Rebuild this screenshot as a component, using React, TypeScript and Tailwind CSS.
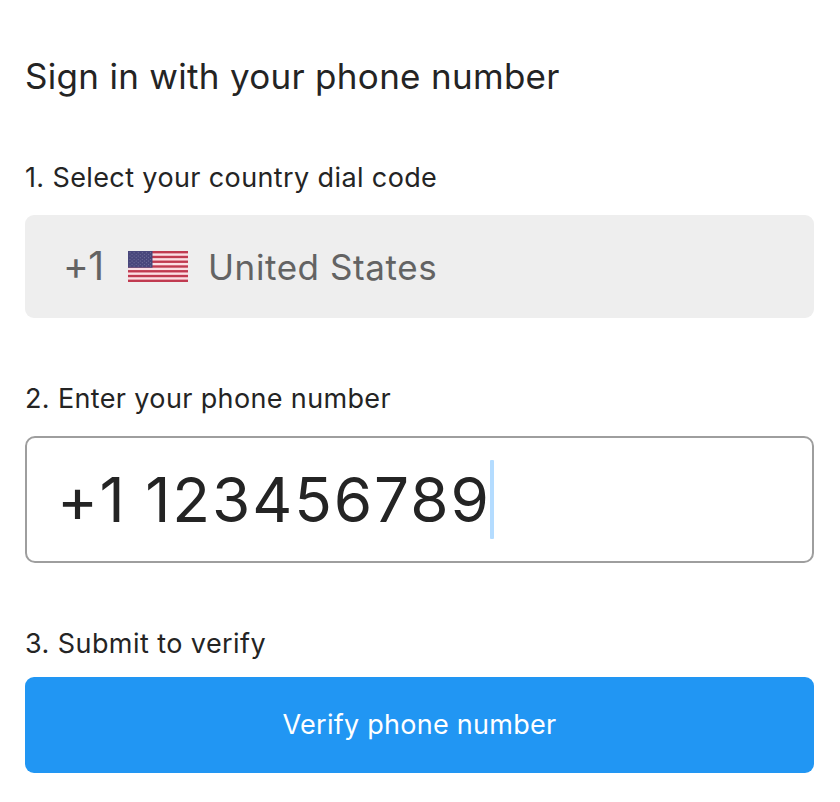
import React from "react";

const STAR_ROWS = [0, 1, 2, 3, 4, 5, 6, 7, 8];

function UsFlag() {
  return (
    <svg width="60" height="31" viewBox="0 0 60 31" className="shrink-0" aria-label="United States flag">
      <rect width="60" height="31" fill="#fbdfe4" />
      {[0, 2, 4, 6, 8, 10, 12].map((i) => (
        <rect key={i} y={(i * 31) / 13} width="60" height={31 / 13} fill="#c03a50" />
      ))}
      <rect width="24.5" height="16.7" fill="#48477c" />
      {STAR_ROWS.map((r) =>
        Array.from({ length: r % 2 ? 5 : 6 }, (_, c) => (
          <circle key={`${r}-${c}`} cx={2 + c * 4.08 + (r % 2 ? 2.04 : 0)} cy={1.7 + r * 1.67} r="0.45" fill="#a09fc0" />
        ))
      )}
    </svg>
  );
}

export default function App() {
  return (
    <main className="flex h-[802px] w-[840px] flex-col bg-white pl-[25px] pr-[26px] font-[Inter,sans-serif] text-[#242424] [font-feature-settings:'calt'_0]">
      <h1 className="mt-[51px] h-[50px] whitespace-nowrap text-[35px] leading-[50px] tracking-[0.3px]">Sign in with your phone number</h1>
      <label className="mt-[57px] h-[40px] whitespace-nowrap text-[27px] leading-[40px] tracking-[0.38px]">1. Select your country dial code</label>
      <button className="mt-[17px] flex h-[103px] w-full items-center rounded-[9px] bg-[#eeeeee] pl-[38px] text-[35px] text-[#636363]">
        <span className="w-[65px] text-left text-[39px] tracking-[-0.6px]">+1</span>
        <UsFlag />
        <span className="ml-[20px] pt-[2px] tracking-[0.58px]">United States</span>
      </button>
      <label className="mt-[61px] h-[40px] whitespace-nowrap text-[27px] leading-[40px] tracking-[0.36px]">2. Enter your phone number</label>
      <div className="mt-[17px] flex h-[127px] w-full items-center rounded-[10px] border-2 border-[#9e9e9e] pl-[30px]">
        <span className="w-[433px] whitespace-nowrap text-[62px] leading-[80px] tracking-[1.5px]">
          +1 <span className="tracking-[1.9px]">123456789</span>
        </span>
        <span className="h-[79px] w-[4px] rounded-[1px] bg-[#b4dcff]" />
      </div>
      <label className="mt-[61px] h-[40px] whitespace-nowrap text-[27px] leading-[40px] tracking-[0.43px]">3. Submit to verify</label>
      <button className="mt-[13px] h-[96px] w-full rounded-[9px] bg-[#2196f3] text-[27px] tracking-[0.26px] text-white">Verify phone number</button>
    </main>
  );
}
